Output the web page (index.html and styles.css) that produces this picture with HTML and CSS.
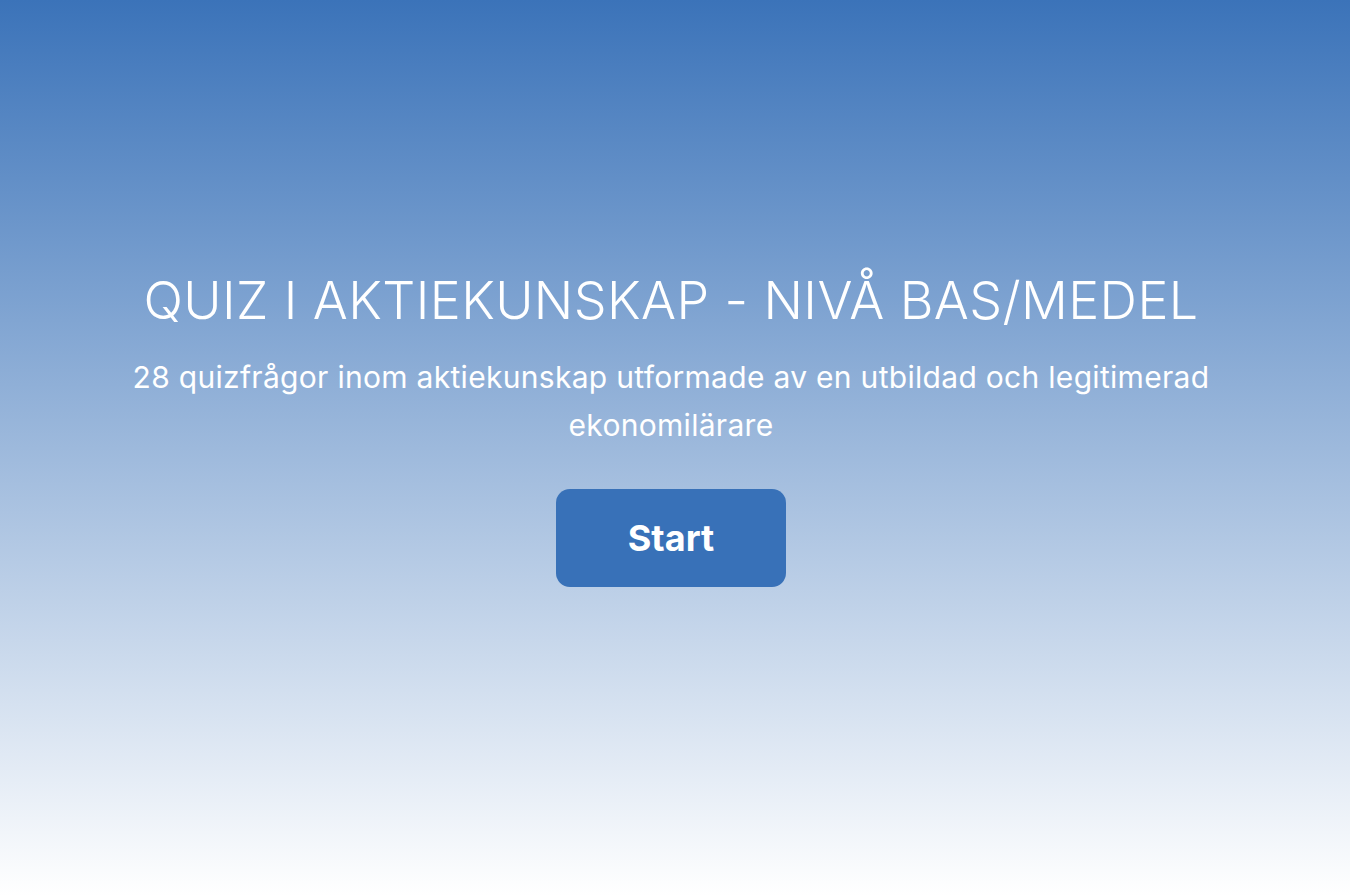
FILE: index.html
```html
<!DOCTYPE html>
<html>
<head>
    <title>Quiz i aktiekunskap</title>
    <link rel="stylesheet" href="styles.css">
</head>
<body>
    <div class="start-screen">
        <h1>QUIZ I AKTIEKUNSKAP - NIVÅ BAS/MEDEL</h1>
        <p class="intro">28 quizfrågor inom aktiekunskap utformade av en utbildad och legitimerad ekonomilärare</p>
        <button class="start-btn">Start</button>
    </div>
</body>
</html>
```

FILE: styles.css
```css
html, body {
    margin: 0;
    height: 100%;
}
body {
    font-family: Inter, "Noto Sans", sans-serif;
    background: linear-gradient(to bottom, #3b73b9 0%, #ffffff 100%);
    color: white;
}
.start-screen {
    height: 100%;
    display: flex;
    flex-direction: column;
    align-items: center;
    justify-content: center;
    text-align: center;
    padding: 0 68px 40px 60px;
    box-sizing: border-box;
}
h1 {
    font-weight: 300;
    font-size: 52px;
    letter-spacing: 0.4px;
    margin: 0 0 21px 0;
}
.intro {
    font-size: 30px;
    line-height: 48px;
    letter-spacing: 0.3px;
    margin: 0 0 40px 0;
}
.start-btn {
    font-family: inherit;
    background-color: #3871b8;
    color: white;
    font-size: 36px;
    font-weight: 700;
    width: 230px;
    height: 98px;
    border: none;
    border-radius: 14px;
    cursor: pointer;
}
```
